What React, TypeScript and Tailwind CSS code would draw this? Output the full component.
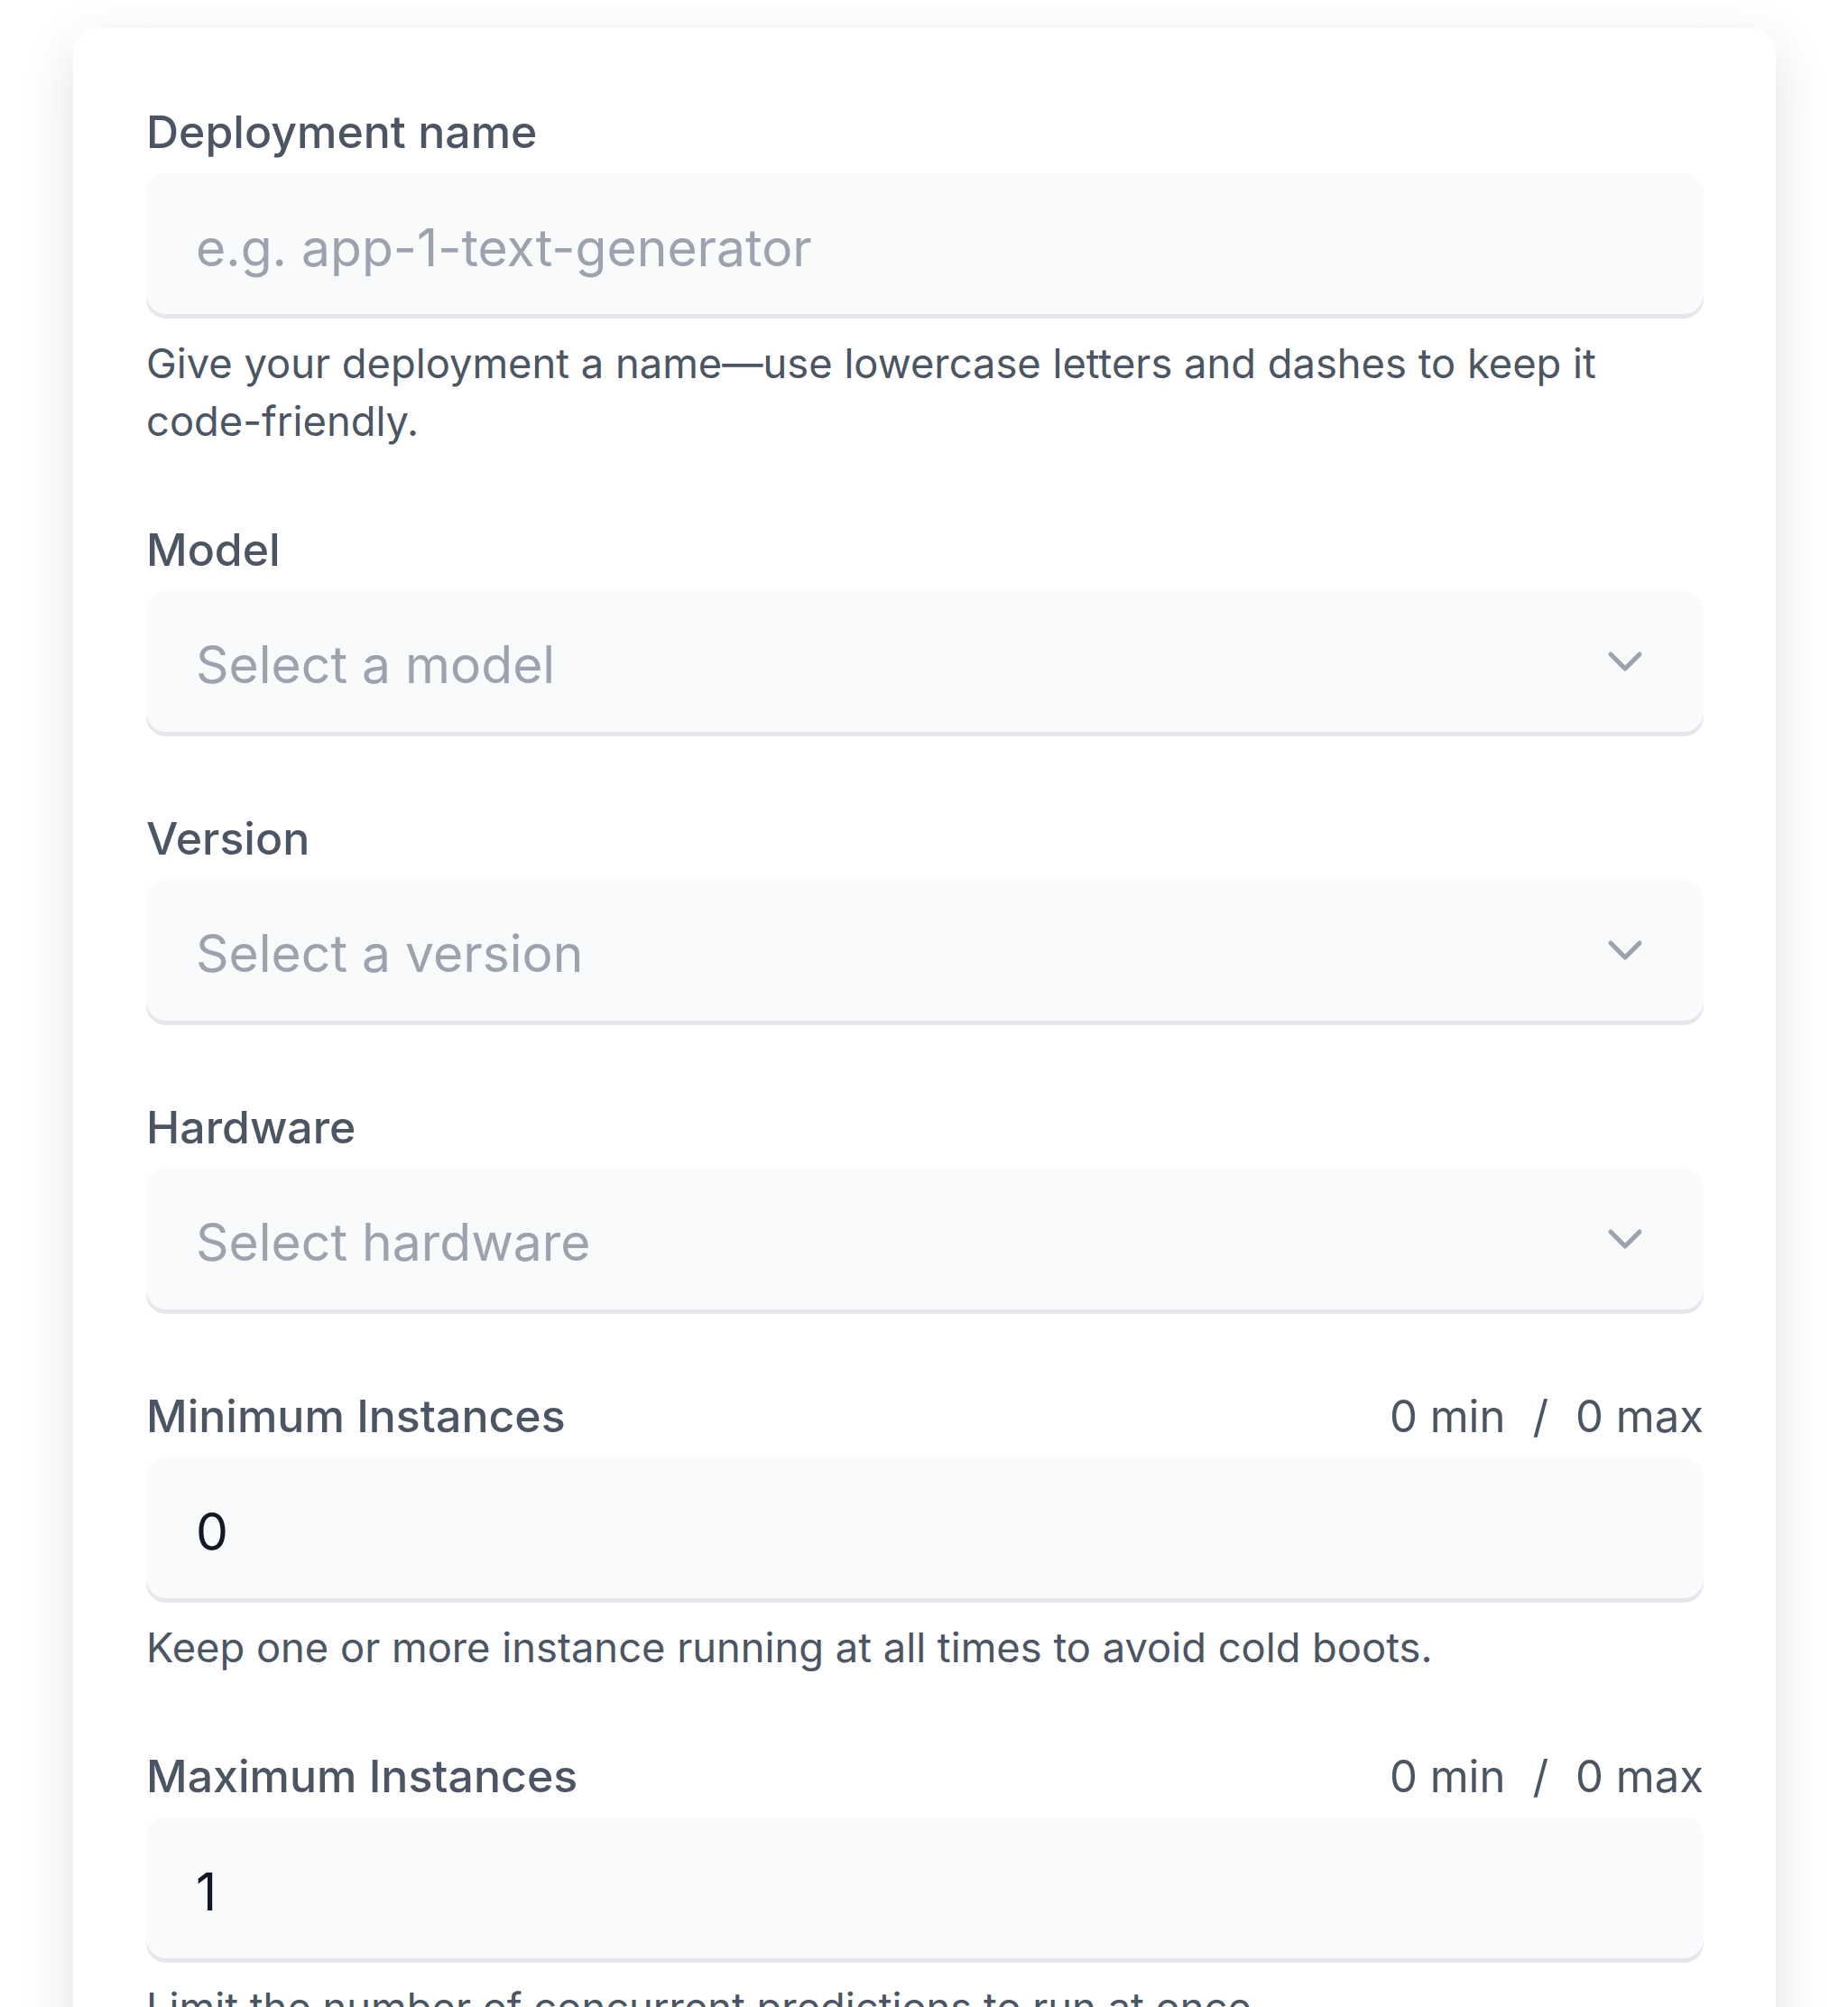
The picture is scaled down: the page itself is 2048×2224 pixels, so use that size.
import React from 'react';
import { ChevronDown } from 'lucide-react';

const boxBase =
  "w-full h-[156px] rounded-[22px] bg-[#f9fafb] shadow-[0_5px_0_0_#e5e7eb] px-[55px] text-[57px]";

const Label: React.FC<{ text: string; range?: boolean }> = ({ text, range }) => (
  <div className="flex items-baseline justify-between h-[60px] mb-[16px] leading-[60px] text-[#4b5563]">
    <span className="text-[50px] font-medium">{text}</span>
    {range && (
      <span className="flex items-baseline gap-[30px] text-[49px]">
        <span>0 min</span>
        <span>/</span>
        <span>0 max</span>
      </span>
    )}
  </div>
);

const Help: React.FC<{ children: React.ReactNode }> = ({ children }) => (
  <p className="mt-[23px] text-[45.3px] leading-[64px] text-[#4b5563]">{children}</p>
);

const TextInput: React.FC<{ placeholder?: string; value?: string }> = ({ placeholder, value }) => (
  <input
    type="text"
    readOnly
    placeholder={placeholder}
    value={value ?? ''}
    className={`${boxBase} block pt-[8px] text-[#111827] placeholder:text-[#9ca3af] outline-none`}
  />
);

const SelectBox: React.FC<{ placeholder: string }> = ({ placeholder }) => (
  <div role="combobox" className={`${boxBase} flex items-center justify-between cursor-pointer`}>
    <span className="pt-[8px] text-[#9ca3af]">{placeholder}</span>
    <ChevronDown size={64} strokeWidth={1.9} className="text-[#9ca3af] shrink-0" />
  </div>
);

export default function App() {
  return (
    <div className="h-[2224px] overflow-hidden bg-white font-['Inter',sans-serif]">
      <div className="ml-[81px] mr-[80px] mt-[31px] rounded-[28px] bg-white pl-[81px] pr-[80px] pt-[85px] pb-[81px] shadow-[0_20px_60px_rgba(0,0,0,0.12)]">
        <div className="mb-[80px]">
          <Label text="Deployment name" />
          <TextInput placeholder="e.g. app-1-text-generator" />
          <Help>Give your deployment a name—use lowercase letters and dashes to keep it code-friendly.</Help>
        </div>

        <div className="mb-[88px]">
          <Label text="Model" />
          <SelectBox placeholder="Select a model" />
        </div>

        <div className="mb-[88px]">
          <Label text="Version" />
          <SelectBox placeholder="Select a version" />
        </div>

        <div className="mb-[88px]">
          <Label text="Hardware" />
          <SelectBox placeholder="Select hardware" />
        </div>

        <div className="mb-[80px]">
          <Label text="Minimum Instances" range />
          <TextInput value="0" />
          <Help>Keep one or more instance running at all times to avoid cold boots.</Help>
        </div>

        <div className="mb-[80px]">
          <Label text="Maximum Instances" range />
          <TextInput value="1" />
          <Help>Limit the number of concurrent predictions to run at once.</Help>
        </div>
      </div>
    </div>
  );
}
